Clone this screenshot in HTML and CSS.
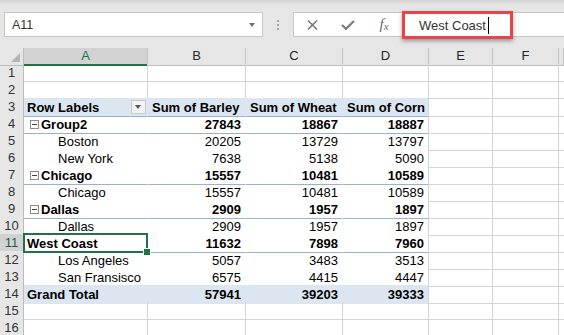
FILE: index.html
```html
<!DOCTYPE html>
<html>
<head>
<meta charset="utf-8">
<link rel="stylesheet" href="styles.css">
</head>
<body>
<div class="topbar">
  <div class="namebox"><span class="nb-text">A11</span><span class="caret"></span></div>
  <div class="grip"><i></i><i></i><i></i></div>
  <div class="fbar">
    <span class="fbtn"><svg width="11" height="10" viewBox="0 0 11 10"><path d="M1 0.5L10 9.5M10 0.5L1 9.5" stroke="#7a7a7a" stroke-width="1.6" fill="none"/></svg></span>
    <span class="fbtn"><svg width="14" height="10" viewBox="0 0 14 10"><path d="M1 5L5 8.8L13 1" stroke="#7a7a7a" stroke-width="2.2" fill="none"/></svg></span>
    <span class="fbtn fx"><span class="f">f</span><span class="x">x</span></span>
    <div class="finput">West Coast<span class="cursor"></span></div>
  </div>
</div>
<div class="sheet">
  <div class="row hdr">
    <div class="corner"></div>
    <div class="ch selc">A</div>
    <div class="ch">B</div>
    <div class="ch">C</div>
    <div class="ch">D</div>
    <div class="ch">E</div>
    <div class="ch">F</div>
    <div class="ch"></div>
  </div>
  <div class="row">
    <div class="rh">1</div>
    <div class="cell"></div><div class="cell"></div><div class="cell"></div><div class="cell"></div><div class="cell"></div><div class="cell"></div><div class="cell"></div>
  </div>
  <div class="row">
    <div class="rh">2</div>
    <div class="cell"></div><div class="cell"></div><div class="cell"></div><div class="cell"></div><div class="cell"></div><div class="cell"></div><div class="cell"></div>
  </div>
  <div class="row">
    <div class="rh">3</div>
    <div class="cell pv ph ln labels"><span>Row Labels</span><span class="fbtn-filter"></span></div>
    <div class="cell pv ph ln">Sum of Barley</div>
    <div class="cell pv ph ln">Sum of Wheat</div>
    <div class="cell pv pr ph ln">Sum of Corn</div>
    <div class="cell"></div><div class="cell"></div><div class="cell"></div>
  </div>
  <div class="row">
    <div class="rh">4</div>
    <div class="cell pv ln b"><span class="tg"></span>Group2</div>
    <div class="cell pv ln b num">27843</div>
    <div class="cell pv ln b num">18867</div>
    <div class="cell pv pr ln b num">18887</div>
    <div class="cell"></div><div class="cell"></div><div class="cell"></div>
  </div>
  <div class="row">
    <div class="rh">5</div>
    <div class="cell pv ind">Boston</div>
    <div class="cell pv num">20205</div>
    <div class="cell pv num">13729</div>
    <div class="cell pv pr num">13797</div>
    <div class="cell"></div><div class="cell"></div><div class="cell"></div>
  </div>
  <div class="row">
    <div class="rh">6</div>
    <div class="cell pv ind">New York</div>
    <div class="cell pv num">7638</div>
    <div class="cell pv num">5138</div>
    <div class="cell pv pr num">5090</div>
    <div class="cell"></div><div class="cell"></div><div class="cell"></div>
  </div>
  <div class="row">
    <div class="rh">7</div>
    <div class="cell pv ln b"><span class="tg"></span>Chicago</div>
    <div class="cell pv ln b num">15557</div>
    <div class="cell pv ln b num">10481</div>
    <div class="cell pv pr ln b num">10589</div>
    <div class="cell"></div><div class="cell"></div><div class="cell"></div>
  </div>
  <div class="row">
    <div class="rh">8</div>
    <div class="cell pv ind">Chicago</div>
    <div class="cell pv num">15557</div>
    <div class="cell pv num">10481</div>
    <div class="cell pv pr num">10589</div>
    <div class="cell"></div><div class="cell"></div><div class="cell"></div>
  </div>
  <div class="row">
    <div class="rh">9</div>
    <div class="cell pv ln b"><span class="tg"></span>Dallas</div>
    <div class="cell pv ln b num">2909</div>
    <div class="cell pv ln b num">1957</div>
    <div class="cell pv pr ln b num">1897</div>
    <div class="cell"></div><div class="cell"></div><div class="cell"></div>
  </div>
  <div class="row">
    <div class="rh">10</div>
    <div class="cell pv ind">Dallas</div>
    <div class="cell pv num">2909</div>
    <div class="cell pv num">1957</div>
    <div class="cell pv pr num">1897</div>
    <div class="cell"></div><div class="cell"></div><div class="cell"></div>
  </div>
  <div class="row">
    <div class="rh selr">11</div>
    <div class="cell pv ln b active">West Coast</div>
    <div class="cell pv ln b num">11632</div>
    <div class="cell pv ln b num">7898</div>
    <div class="cell pv pr ln b num">7960</div>
    <div class="cell"></div><div class="cell"></div><div class="cell"></div>
  </div>
  <div class="row">
    <div class="rh">12</div>
    <div class="cell pv ind">Los Angeles</div>
    <div class="cell pv num">5057</div>
    <div class="cell pv num">3483</div>
    <div class="cell pv pr num">3513</div>
    <div class="cell"></div><div class="cell"></div><div class="cell"></div>
  </div>
  <div class="row">
    <div class="rh">13</div>
    <div class="cell pv ln ind">San Fransisco</div>
    <div class="cell pv ln num">6575</div>
    <div class="cell pv ln num">4415</div>
    <div class="cell pv pr ln num">4447</div>
    <div class="cell"></div><div class="cell"></div><div class="cell"></div>
  </div>
  <div class="row">
    <div class="rh">14</div>
    <div class="cell pv gt">Grand Total</div>
    <div class="cell pv gt num">57941</div>
    <div class="cell pv gt num">39203</div>
    <div class="cell pv pr gt num">39333</div>
    <div class="cell"></div><div class="cell"></div><div class="cell"></div>
  </div>
  <div class="row">
    <div class="rh">15</div>
    <div class="cell"></div><div class="cell"></div><div class="cell"></div><div class="cell"></div><div class="cell"></div><div class="cell"></div><div class="cell"></div>
  </div>
  <div class="row">
    <div class="rh">16</div>
    <div class="cell"></div><div class="cell"></div><div class="cell"></div><div class="cell"></div><div class="cell"></div><div class="cell"></div><div class="cell"></div>
  </div>
</div>
</body>
</html>
```

FILE: styles.css
```css
* { box-sizing: border-box; }
html, body {
  margin: 0;
  padding: 0;
  width: 564px;
  height: 335px;
  overflow: hidden;
  background: #ffffff;
  font-family: "Liberation Sans", Arial, sans-serif;
}

/* ---------- top bar ---------- */
.topbar {
  height: 48px;
  display: flex;
  align-items: flex-start;
  padding: 12px 0 0 4px;
  background: linear-gradient(#d2d2d2 0px, #e2e2e2 4px, #e6e6e6 7px, #e6e6e6 100%);
}
.namebox {
  width: 259px;
  height: 25px;
  background: #ffffff;
  border: 1px solid #c6c6c6;
  display: flex;
  align-items: center;
  justify-content: space-between;
  padding: 0 7px 0 7px;
}
.nb-text {
  font-size: 12.5px;
  color: #333;
}
.caret {
  width: 0;
  height: 0;
  border-left: 3.5px solid transparent;
  border-right: 3.5px solid transparent;
  border-top: 4px solid #707070;
  margin-top: 1px;
}
.grip {
  width: 30px;
  height: 25px;
  display: flex;
  flex-direction: column;
  align-items: center;
  justify-content: center;
  gap: 2px;
}
.grip i {
  display: block;
  width: 2px;
  height: 2px;
  background: #a6a6a6;
}
.fbar {
  flex: 1;
  height: 25px;
  background: #ffffff;
  border: 1px solid #c6c6c6;
  border-right: none;
  display: flex;
  align-items: flex-start;
}
.fbtn {
  width: 36px;
  height: 23px;
  display: flex;
  align-items: center;
  justify-content: center;
}
.fx {
  font-family: "Liberation Serif", "Times New Roman", serif;
  font-style: italic;
  color: #6a6a6a;
  font-size: 15px;
  padding-bottom: 1px;
}
.fx .x {
  font-size: 11px;
  margin-top: 4px;
  margin-left: 0px;
}
.finput {
  width: 111px;
  height: 28px;
  margin-top: -2px;
  border: 3px solid #e9444a;
  box-shadow: 0 2px 4px rgba(0, 0, 0, 0.35);
  background: #ffffff;
  font-size: 13px;
  color: #333;
  padding-left: 14px;
  display: flex;
  align-items: center;
}
.cursor {
  display: inline-block;
  width: 1px;
  height: 17px;
  background: #000;
  margin-left: 2px;
}

/* ---------- sheet ---------- */
.row {
  display: grid;
  grid-template-columns: 24px 124px 98px 97px 86px 64px 66px 5px;
  height: 17px;
}
.row.hdr {
  height: 16px;
}
.corner {
  background: #e6e6e6;
  border-right: 1px solid #bcbcbc;
  border-bottom: 1px solid #bcbcbc;
  position: relative;
}
.corner::after {
  content: "";
  position: absolute;
  right: 3px;
  bottom: 3px;
  width: 0;
  height: 0;
  border-left: 9px solid transparent;
  border-bottom: 9px solid #b5b5b5;
}
.ch {
  background: #e6e6e6;
  border-right: 1px solid #c4c4c4;
  border-bottom: 1px solid #bcbcbc;
  text-align: center;
  font-size: 13px;
  line-height: 16px;
  color: #262626;
}
.ch.selc {
  background: #d2d2d2;
  border-bottom: 2px solid #217346;
  color: #217346;
}
.rh {
  background: #e6e6e6;
  border-right: 1px solid #bcbcbc;
  border-bottom: 1px solid #d2d2d2;
  text-align: center;
  font-size: 13px;
  line-height: 16px;
  padding-top: 1px;
  color: #333;
}
.rh.selr {
  background: #d2d2d2;
  color: #1e5e3a;
}
.cell {
  border-right: 1px solid #d4d4d4;
  border-bottom: 1px solid #d4d4d4;
  font-size: 13px;
  line-height: 16px;
  padding: 2px 3px 0 3px;
  white-space: nowrap;
  color: #000;
}
.pv {
  border-right-color: transparent;
  border-bottom-color: transparent;
}
.pv.pr {
  border-right-color: #d4d4d4;
}
.ln {
  border-bottom-color: #95b3d7;
}
.ph {
  background: #dce6f1;
  font-weight: bold;
  padding-left: 4px;
}
.gt {
  background: #dce6f1;
  font-weight: bold;
}
.b {
  font-weight: bold;
}
.num {
  text-align: right;
  padding-right: 4px;
}
.ind {
  padding-left: 34px;
}
.labels {
  display: flex;
  justify-content: space-between;
  align-items: center;
  padding: 0 1px 0 3px;
}
.labels span:first-child {
  padding-top: 2px;
}
.fbtn-filter {
  width: 15px;
  height: 14px;
  background: #f3f3f3;
  border: 1px solid #c8c8c8;
  position: relative;
}
.fbtn-filter::after {
  content: "";
  position: absolute;
  left: 3px;
  top: 4px;
  border-left: 3.5px solid transparent;
  border-right: 3.5px solid transparent;
  border-top: 4px solid #555;
}
.tg {
  display: inline-block;
  width: 9px;
  height: 9px;
  border: 1px solid #8c8c8c;
  background: #fff;
  margin: 0 2px 0 3px;
  position: relative;
  vertical-align: 0px;
}
.tg::after {
  content: "";
  position: absolute;
  left: 1px;
  top: 3px;
  width: 5px;
  height: 1px;
  background: #444;
}
.active {
  position: relative;
}
.active::after {
  content: "";
  position: absolute;
  left: -1px;
  top: -1px;
  right: -1px;
  bottom: -1px;
  border: 2px solid #217346;
  z-index: 2;
}
.active::before {
  content: "";
  position: absolute;
  right: -4px;
  bottom: -4px;
  width: 6px;
  height: 6px;
  background: #217346;
  border: 1px solid #ffffff;
  z-index: 3;
}
```
